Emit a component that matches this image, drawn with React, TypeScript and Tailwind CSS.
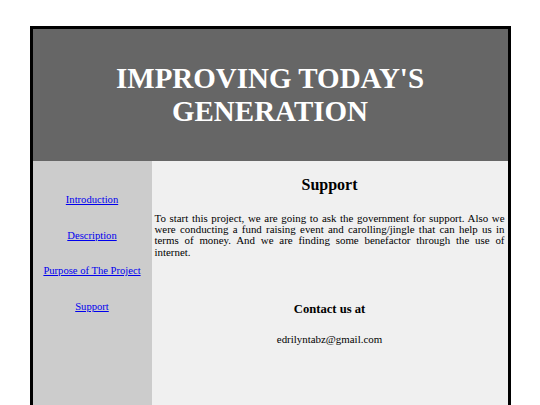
export default function App() {
  const serif = { fontFamily: '"Liberation Serif", "Times New Roman", serif' };
  return (
    <div className="h-[405px] overflow-hidden bg-white pt-[26px]" style={serif}>
      <div className="mx-auto w-[481px] border-x-[3px] border-t-[3px] border-black">
        <div className="flex h-[132px] items-center justify-center bg-[#666666]">
          <h1 className="text-center text-[29px] font-bold leading-[33px] text-white">
            IMPROVING TODAY'S
            <br />
            GENERATION
          </h1>
        </div>
        <div className="flex min-h-[300px]">
          <nav className="flex w-[119px] flex-col items-center gap-[23.5px] bg-[#cccccc] pt-[33px] text-[10.6px] leading-[12px]">
            <a href="#" className="text-[#0000ee] underline">Introduction</a>
            <a href="#" className="text-[#0000ee] underline">Description</a>
            <a href="#" className="text-[#0000ee] underline">Purpose of The Project</a>
            <a href="#" className="text-[#0000ee] underline">Support</a>
          </nav>
          <main className="flex-1 bg-[#f0f0f0] px-[3px] text-black">
            <h2 className="mt-[15px] text-center text-[16px] font-bold leading-[18px]">Support</h2>
            <p className="mt-[19px] text-justify text-[10.9px] leading-[11.2px]">
              To start this project, we are going to ask the government for support. Also we were conducting a fund raising event and carolling/jingle that can help us in terms of money. And we are finding some benefactor through the use of internet.
            </p>
            <h3 className="mt-[44px] text-center text-[12.6px] font-bold leading-[14px]">Contact us at</h3>
            <p className="mt-[18px] text-center text-[10.9px] leading-[11px]">edrilyntabz@gmail.com</p>
          </main>
        </div>
      </div>
    </div>
  );
}
